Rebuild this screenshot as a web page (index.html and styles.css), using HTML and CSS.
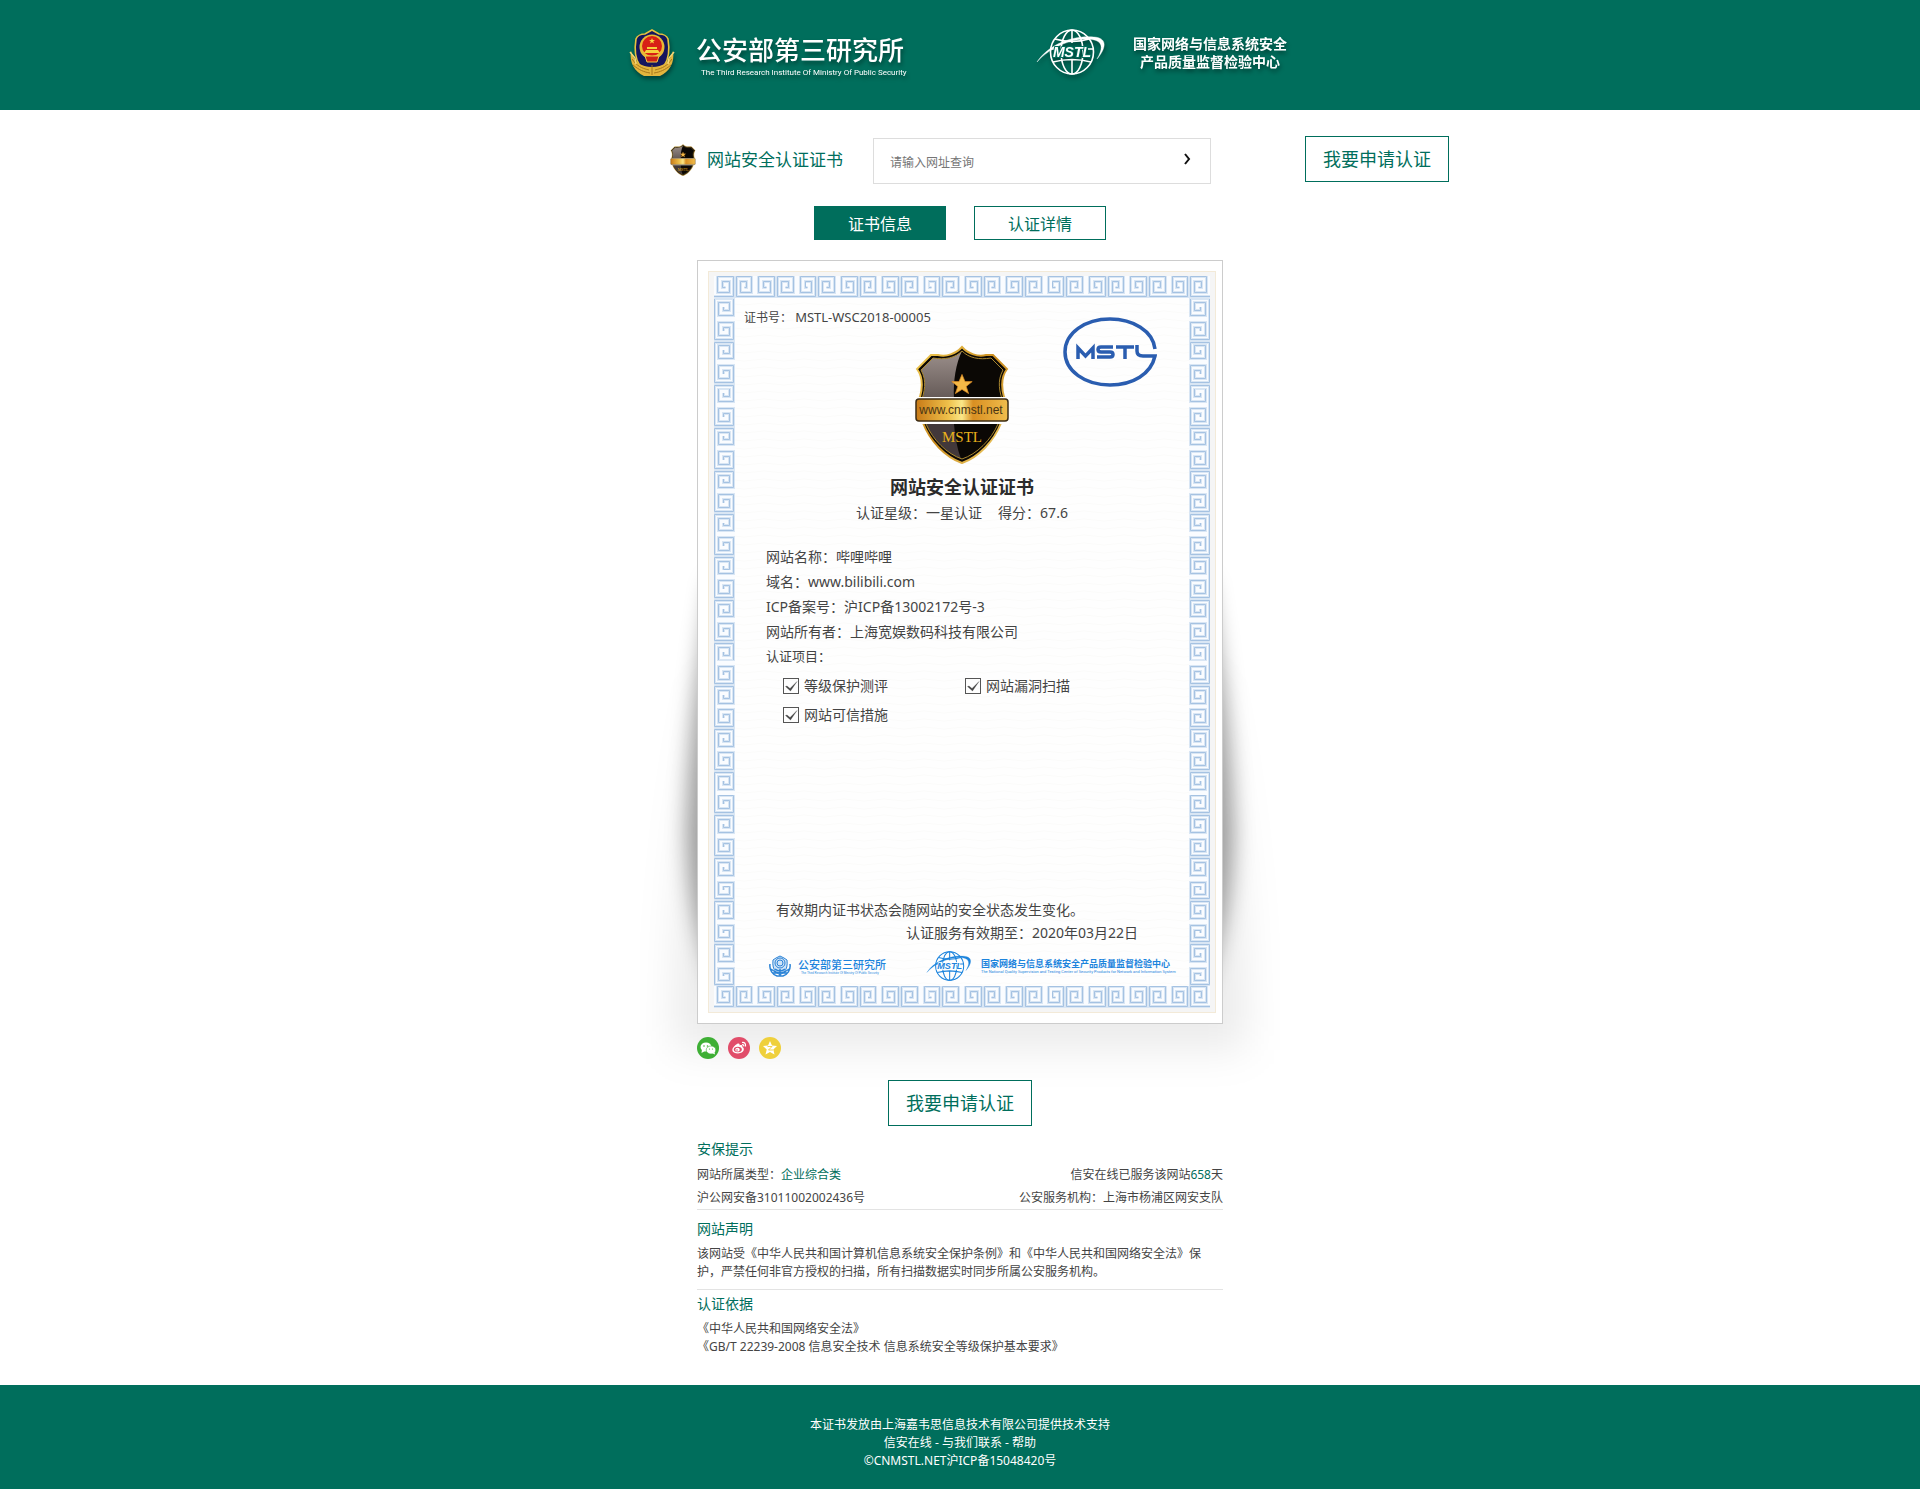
FILE: index.html
```html
<!DOCTYPE html>
<html lang="zh-CN">
<head>
<meta charset="utf-8">
<title>网站安全认证证书</title>
<link rel="stylesheet" href="styles.css">
</head>
<body>
<svg class="defs" aria-hidden="true">
  <defs>
    <linearGradient id="gold" x1="0" x2="1" y1="0" y2="1">
      <stop offset="0" stop-color="#f3cf57"/><stop offset=".5" stop-color="#c98a1c"/><stop offset="1" stop-color="#f6d873"/>
    </linearGradient>
    <linearGradient id="band" x1="0" x2="1" y1="0" y2="0">
      <stop offset="0" stop-color="#c87a17"/><stop offset=".35" stop-color="#eec04a"/><stop offset=".5" stop-color="#fbe788"/><stop offset=".62" stop-color="#d98f22"/><stop offset="1" stop-color="#f0bd4c"/>
    </linearGradient>
    <linearGradient id="gloss" x1="0" x2="0" y1="0" y2="1">
      <stop offset="0" stop-color="#9c908c"/><stop offset="1" stop-color="#645956"/>
    </linearGradient>
    <symbol id="shield" viewBox="0 0 94 119">
      <path d="M47 2C41 9 31 12 23 10H16L2 24C8 32 8 41 5 52L2 55V76L8 78C15 96 30 112 47 118C64 112 79 96 86 78L92 76V55L89 52C86 41 86 32 92 24L78 10H71C63 12 53 9 47 2Z" fill="#0b0805" stroke="url(#gold)" stroke-width="2"/>
      <path d="M47 6C40 13 30 15 18 13L6 25C12 36 10 46 7 54H39C38 36 41 18 47 6Z" fill="url(#gloss)"/>
      <path d="M11 79C18 95 32 108 46 114C42 103 40 92 39 79Z" fill="#42383a"/>
      <path d="M47 6C40 13 30 15 18 13L6 25C12 36 10 46 5 60M47 6C54 13 64 15 76 13L88 25C82 36 84 46 89 60M11 79C18 95 32 109 47 114C62 109 76 95 83 79" fill="none" stroke="#a8862f"/>
      <path d="M47 31L49.500 37H55.500L50.500 41L52.500 47L47 43.500L41.500 47L43.500 41L38.500 37H44.500Z" fill="#f5b947" stroke="#d98a24" stroke-width=".6" transform="translate(-9.400 -7.800) scale(1.200)"/>
      <path d="M0 52H94V79H0Z" fill="#fff"/>
      <rect x="1" y="54" width="92" height="22" rx="3" fill="url(#band)" stroke="#3d2c14" stroke-width="1.500"/>
    </symbol>
    <symbol id="globe" viewBox="0 0 70 46">
      <g fill="none" stroke="currentColor" stroke-width="1.600">
        <ellipse cx="36" cy="23" rx="21.500" ry="22"/>
        <ellipse cx="36" cy="23" rx="11" ry="22"/>
        <path d="M36 1V14M36 31V45M19 10Q36 15 53 10M17 33Q36 28 55 33M15 20H22M52 20H57"/>
        <path d="M1 33C12 16 36 6 58 8C71 9 71 18 61 30C68 18 66 12 56 10.500C38 8 14 18 1 33Z" fill="currentColor" stroke-width=".4"/>
      </g>
    </symbol>
    <symbol id="emblem" viewBox="0 0 46 48">
      <path d="M23 1L30 5C34 5 38 7 39 10C41 22 40 30 35 37L23 44L11 37C6 30 5 22 7 10C8 7 12 5 16 5Z" fill="#15155e" stroke="#e6c23e" stroke-width="1.600"/>
      <circle cx="23" cy="18" r="12.500" fill="#e9b935"/>
      <circle cx="23" cy="17" r="10" fill="#d81f16"/>
      <path d="M15 24H31L29 21H17ZM18 20H28V18H18Z" fill="#f6cf3c"/>
      <path d="M23 9L23.800 11H26L24.200 12.300L25 14.500L23 13.200L21 14.500L21.800 12.300L20 11H22.200Z" fill="#f9d742"/>
      <path d="M16 27H30L28 33H18Z" fill="#cc2117" stroke="#f1c940"/>
      <path d="M2 22C0 34 6 43 15 47H31C40 43 46 34 44 22C41 33 34 38 23 38C12 38 5 33 2 22Z" fill="#e3b53d"/>
      <path d="M3 30C8 37 12 39 20 41M4 36C10 41 15 43 21 44M43 30C38 37 34 39 26 41M42 36C36 41 31 43 25 44M23 36V46" fill="none" stroke="#a8771c"/>
      <path d="M1 23L6 29L7 35M45 23L40 29L39 35" fill="none" stroke="#f4d77a" stroke-width="1.500"/>
    </symbol>
  </defs>
</svg>

<header class="top">
  <div class="top-inner">
    <div class="org">
      <svg class="org-emblem"><use href="#emblem"/></svg>
      <div class="org-text">
        <strong class="org-name">公安部第三研究所</strong>
        <span class="org-en">The Third Research Institute Of Ministry Of Public Security</span>
      </div>
    </div>
    <div class="org">
      <svg class="org-globe" viewBox="0 0 70 46"><use href="#globe"/><text class="globe-text" x="36" y="28">MSTL</text></svg>
      <strong class="center-name">国家网络与信息系统安全<br>产品质量监督检验中心</strong>
    </div>
  </div>
</header>

<main>
  <div class="search-row">
    <div class="brand">
      <svg class="brand-icon" viewBox="0 0 94 119"><use href="#shield"/><text class="shield-mark" x="47" y="101">MSTL</text></svg>
      <h1 class="brand-name">网站安全认证证书</h1>
    </div>
    <form class="search">
      <input class="search-input" type="text" aria-label="网址查询" placeholder="请输入网址查询">
      <button class="search-go" type="button" aria-label="查询"><svg viewBox="0 0 8 12"><path d="M2 1L6 6L2 11"/></svg></button>
    </form>
    <button class="apply apply-top" type="button">我要申请认证</button>
  </div>

  <nav class="tabs">
    <button class="tab tab-active" type="button">证书信息</button>
    <button class="tab" type="button">认证详情</button>
  </nav>

  <section class="stage">
    <div class="card">
      <div class="mat">
        <article class="paper">
          <div class="paper-head">
            <p class="cert-no">证书号： <span>MSTL-WSC2018-00005</span></p>
            <svg class="cert-shield" viewBox="0 0 94 119"><use href="#shield"/><text class="shield-url" x="46" y="69">www.cnmstl.net</text><text class="shield-mark" x="47" y="97">MSTL</text></svg>
            <svg class="cert-oval" viewBox="0 0 94 70" aria-label="MSTL">
              <g fill="none" stroke="#2a5db0" stroke-width="3.500">
                <path d="M92 32C90 14 70 2 47 2C22 2 2 16 2 35C2 54 22 68 47 68C70 68 88 57 92 39H80Q74 39 74 34V28"/>
                <path d="M15 42V31L22.500 39L30 31V42M50 30H38Q35 30 35 32.500T38 35H47Q50 35 50 37.500T47 40H34M53 30H71M62 30V42"/>
              </g>
            </svg>
          </div>
          <h2 class="cert-title">网站安全认证证书</h2>
          <p class="cert-level"><span>认证星级：一星认证</span><span>得分：67.6</span></p>
          <div class="cert-info">
            <p>网站名称：哔哩哔哩</p>
            <p>域名：www.bilibili.com</p>
            <p>ICP备案号：沪ICP备13002172号-3</p>
            <p>网站所有者：上海宽娱数码科技有限公司</p>
            <p class="cert-items">认证项目：</p>
          </div>
          <div class="checks">
            <label><input type="checkbox" checked>等级保护测评</label>
            <label><input type="checkbox" checked>网站漏洞扫描</label>
            <label><input type="checkbox" checked>网站可信措施</label>
          </div>
          <div class="cert-foot">
            <p class="cert-note">有效期内证书状态会随网站的安全状态发生变化。</p>
            <p class="cert-date">认证服务有效期至：2020年03月22日</p>
            <div class="cert-logos">
              <svg class="mini-emblem" viewBox="0 0 22 22">
                <g fill="none" stroke="#2b83d6">
                  <path d="M11 1L15 3L18 5Q19 13 15 17L11 20L7 17Q3 13 4 5L7 3Z" fill="#cfe3f7"/>
                  <circle cx="11" cy="8" r="5"/><circle cx="11" cy="8" r="3"/>
                  <path d="M1 9C0 15 4 20 8 21H14C18 20 22 15 21 9M2 14Q7 18 11 18T20 14M6 14Q11 18 16 14M4 18H18M11 14V21" stroke-width="1.500"/>
                </g>
              </svg>
              <div class="mini-org">
                <strong>公安部第三研究所</strong>
                <span>The Third Research Institute Of Ministry Of Public Security</span>
              </div>
              <svg class="mini-globe" viewBox="0 0 70 46"><use href="#globe"/><text class="globe-text" x="36" y="28">MSTL</text></svg>
              <div class="mini-center">
                <strong>国家网络与信息系统安全产品质量监督检验中心</strong>
                <span>The National Quality Supervision and Testing Center of Security Products for Network and Information System</span>
              </div>
            </div>
          </div>
        </article>
      </div>
    </div>
    <div class="share">
      <a href="#" aria-label="微信"><svg viewBox="0 0 22 22"><circle cx="11" cy="11" r="11" fill="#3eaf35"/><ellipse cx="9" cy="10" rx="5.500" ry="4.500" fill="#fff"/><path d="M5 12L4.500 16L8 14Z" fill="#fff"/><ellipse cx="14" cy="13" rx="4.800" ry="4" fill="#fff" stroke="#3eaf35" stroke-width=".6"/><path d="M15 16L18 17.500L17.500 15Z" fill="#fff"/><g fill="#3eaf35"><circle cx="7" cy="9" r=".8"/><circle cx="10.500" cy="9" r=".8"/><circle cx="12.500" cy="12" r=".6"/><circle cx="15.500" cy="12" r=".6"/></g></svg></a>
      <a href="#" aria-label="微博"><svg viewBox="0 0 22 22"><circle cx="11" cy="11" r="11" fill="#e14d6a"/><path d="M9 7C11 6 12 7 11.500 8.500C14 7.500 15 8.500 14.300 10C17 11 16.500 16 10 16.500C4 16.500 3 12.500 6 9.500C7 8.500 8 7.500 9 7Z" fill="#fff"/><ellipse cx="9.800" cy="12.500" rx="4" ry="2.800" fill="#e14d6a"/><ellipse cx="9.500" cy="12.700" rx="2.200" ry="1.900" fill="#fff"/><circle cx="9" cy="13" r=".8" fill="#e14d6a"/><path d="M14 5.500Q18 5 17.500 9.500M14 7.500Q16 7.500 15.700 9.300" fill="none" stroke="#fff" stroke-width="1.200"/></svg></a>
      <a href="#" aria-label="QQ空间"><svg viewBox="0 0 22 22"><circle cx="11" cy="11" r="11" fill="#efd03c"/><path d="M11 4L13 8.500L18 9L14.300 12.400L15.500 17.500L11 15L6.500 17.500L7.700 12.400L4 9L9 8.500Z" fill="#fff"/><path d="M8.500 9.500H13L9.500 13H14" fill="none" stroke="#efd03c" stroke-width=".9"/></svg></a>
    </div>
    <button class="apply" type="button">我要申请认证</button>
  </section>

  <div class="notes">
    <section class="note">
      <h3>安保提示</h3>
      <div class="pair"><span>网站所属类型：<em>企业综合类</em></span><span>信安在线已服务该网站<em>658</em>天</span></div>
      <div class="pair"><span>沪公网安备31011002002436号</span><span>公安服务机构：上海市杨浦区网安支队</span></div>
    </section>
    <section class="note note-statement">
      <h3>网站声明</h3>
      <p>该网站受《中华人民共和国计算机信息系统安全保护条例》和《中华人民共和国网络安全法》保护，严禁任何非官方授权的扫描，所有扫描数据实时同步所属公安服务机构。</p>
    </section>
    <section class="note note-basis">
      <h3>认证依据</h3>
      <p>《中华人民共和国网络安全法》<br>《GB/T 22239-2008 信息安全技术 信息系统安全等级保护基本要求》</p>
    </section>
  </div>
</main>

<footer class="bottom">
  <p>本证书发放由上海嘉韦思信息技术有限公司提供技术支持</p>
  <p><a href="#">信安在线</a> - <a href="#">与我们联系</a> - <a href="#">帮助</a></p>
  <p>©CNMSTL.NET沪ICP备15048420号</p>
</footer>
</body>
</html>
```
FILE: styles.css
```css
* {
  box-sizing: border-box;
}

body {
  margin: 0;
  background: #fff;
  color: #444;
  font: 12px/18px "Noto Sans", "Noto Sans CJK SC", sans-serif;
}

h1, h2, h3, p {
  margin: 0;
  font-weight: 400;
}

button, input {
  font-family: inherit;
}

svg {
  display: block;
}

.defs {
  position: absolute;
  width: 0;
  height: 0;
}

/* Header */
.top {
  padding: 29px 0 31px;
  background: #006e5c;
  color: #fff;
}

.top-inner {
  display: flex;
  justify-content: space-between;
  max-width: 662px;
  margin: 0 auto;
  padding-right: 4px;
}

.org {
  display: flex;
  align-items: flex-start;
  filter: drop-shadow(1px 3px 2px rgba(0, 0, 0, 0.4));
}

.org-emblem {
  width: 46px;
  height: 48px;
}

.org-text {
  display: flex;
  flex-direction: column;
  margin: 5px 0 0 21px;
}

.org-name {
  font-size: 26px;
  line-height: 32px;
  font-weight: 500;
}

.org-en {
  padding-left: 5px;
  font: 8px/13px Roboto, sans-serif;
}

.org-globe {
  width: 70px;
  height: 46px;
  margin-right: 27px;
}

.globe-text {
  fill: currentColor;
  stroke: #006e5c;
  stroke-width: 2px;
  paint-order: stroke;
  font: italic bold 14px "Liberation Sans", sans-serif;
  text-anchor: middle;
}

.center-name {
  margin-top: 6px;
  font-size: 14px;
  line-height: 18px;
  text-align: center;
}

/* Search */
.search-row {
  display: flex;
  max-width: 980px;
  margin: 0 auto;
  padding: 26px 0 0 200px;
}

.brand {
  display: flex;
  align-items: center;
  gap: 11px;
  height: 48px;
  margin-right: 30px;
}

.brand-icon {
  width: 26px;
  height: 32px;
}

.brand-name {
  color: #006e5c;
  font-size: 17px;
  line-height: 24px;
}

.search {
  display: flex;
  width: 338px;
  height: 46px;
  margin-top: 2px;
  border: 1px solid #ddd;
}

.search-input {
  flex: 1;
  min-width: 0;
  padding: 2px 0 0 16px;
  border: 0;
  outline: 0;
  background: none;
  font-size: 12px;
}

.search-input::placeholder {
  color: #757575;
}

.search-go {
  width: 48px;
  padding: 0 0 4px 21px;
  border: 0;
  background: none;
}

.search-go svg {
  width: 8px;
  height: 12px;
  fill: none;
  stroke: #111;
  stroke-width: 2px;
}

.apply {
  width: 144px;
  height: 46px;
  padding: 0 0 2px;
  border: 1px solid #006e5c;
  background: #fff;
  color: #006e5c;
  font-size: 18px;
}

.apply-top {
  margin: 0 1px 0 auto;
}

/* Tabs */
.tabs {
  display: flex;
  justify-content: center;
  gap: 28px;
  padding: 22px 0 20px;
}

.tab {
  width: 132px;
  height: 34px;
  padding: 0;
  border: 1px solid #006e5c;
  background: #fff;
  color: #006e5c;
  font-size: 16px;
}

.tab-active {
  background: #006e5c;
  color: #fff;
}

/* Certificate */
.stage {
  display: flex;
  flex-direction: column;
  align-items: center;
  max-width: 640px;
  margin: 0 auto;
  padding: 0 57px;
  background: url("data:image/svg+xml,%3Csvg xmlns='http://www.w3.org/2000/svg' viewBox='0 0 640 866' preserveAspectRatio='none'%3E%3Cdefs%3E%3Cfilter id='a' x='-20%25' y='-20%25' width='140%25' height='140%25'%3E%3CfeGaussianBlur stdDeviation='10'/%3E%3C/filter%3E%3Cfilter id='b' x='-20%25' y='-30%25' width='140%25' height='160%25'%3E%3CfeGaussianBlur stdDeviation='20'/%3E%3C/filter%3E%3C/defs%3E%3Cpath filter='url(%23b)' fill-opacity='.08' d='M70 420Q34 600 34 790H606Q606 600 570 420Z'/%3E%3Cpath filter='url(%23a)' fill-opacity='.34' d='M70 320Q50 440 46 570Q48 660 76 730H564Q592 660 594 570Q590 440 570 320Z'/%3E%3C/svg%3E") 0 0 / 100% 100% no-repeat;
}

.card {
  width: 100%;
  padding: 10px 6px 10px 10px;
  border: 1px solid #ccc;
  background: #fff;
}

.mat {
  padding: 4px 5px;
  border: 1px solid #f3ead8;
  background: #f5f5f5;
}

.paper {
  display: flex;
  flex-direction: column;
  min-height: 732px;
  padding: 32px 0 27px;
  background:
    url("data:image/svg+xml,%3Csvg xmlns='http://www.w3.org/2000/svg' viewBox='0 0 42 22' preserveAspectRatio='none'%3E%3Cpath fill='%23fafcff' d='M0 0h42v22H0z'/%3E%3Cg fill='none' stroke='%23d9e6f4' stroke-width='3'%3E%3Cpath id='p' d='M0 20.500H19.500V.5H3.500V16.500H15.500V5.500H8.500V11.500H11.500M42 20.500H22.500V.5H38.500V16.500H26.500V5.500H33.500V11.500H30.500'/%3E%3C/g%3E%3Cuse href='%23p' fill='none' stroke='%23a5c2e2'/%3E%3C/svg%3E") 0 0 / 42px 22px round no-repeat,
    url("data:image/svg+xml,%3Csvg xmlns='http://www.w3.org/2000/svg' viewBox='0 0 42 22' preserveAspectRatio='none'%3E%3Cpath fill='%23fafcff' d='M0 0h42v22H0z'/%3E%3Cg fill='none' stroke='%23d9e6f4' stroke-width='3'%3E%3Cpath id='p' d='M0 20.500H19.500V.5H3.500V16.500H15.500V5.500H8.500V11.500H11.500M42 20.500H22.500V.5H38.500V16.500H26.500V5.500H33.500V11.500H30.500'/%3E%3C/g%3E%3Cuse href='%23p' fill='none' stroke='%23a5c2e2'/%3E%3C/svg%3E") 0 100% / 42px 22px round no-repeat,
    url("data:image/svg+xml,%3Csvg xmlns='http://www.w3.org/2000/svg' viewBox='0 0 21 44' preserveAspectRatio='none'%3E%3Cpath fill='%23fafcff' d='M0 0h21v44H0z'/%3E%3Cg fill='none' stroke='%23d9e6f4' stroke-width='3'%3E%3Cpath id='p' d='M.5 0V20.500H19.500V3.500H4.500V16.500H15.500V8.500H9.500V12M.5 44V23.500H19.500V40.500H4.500V27.500H15.500V35.500H9.500V32'/%3E%3C/g%3E%3Cuse href='%23p' fill='none' stroke='%23a5c2e2'/%3E%3C/svg%3E") 0 0 / 21px 44px no-repeat round,
    url("data:image/svg+xml,%3Csvg xmlns='http://www.w3.org/2000/svg' viewBox='0 0 21 44' preserveAspectRatio='none'%3E%3Cpath fill='%23fafcff' d='M0 0h21v44H0z'/%3E%3Cg fill='none' stroke='%23d9e6f4' stroke-width='3'%3E%3Cpath id='p' d='M20.500 0V20.500H1.500V3.500H16.500V16.500H5.500V8.500H11.500V12M20.500 44V23.500H1.500V40.500H16.500V27.500H5.500V35.500H11.500V32'/%3E%3C/g%3E%3Cuse href='%23p' fill='none' stroke='%23a5c2e2'/%3E%3C/svg%3E") 100% 0 / 21px 44px no-repeat round,
    url("data:image/svg+xml,%3Csvg xmlns='http://www.w3.org/2000/svg' width='40' height='8'%3E%3Cpath d='M0 4Q10 2 20 4T40 4' fill='none' stroke='%23fbfbfa'/%3E%3C/svg%3E"),
    #fefefe;
}

.paper-head {
  display: grid;
  grid-template-columns: minmax(0, 1fr) 94px minmax(0, 1fr);
  align-items: start;
  padding: 0 30px;
}

.cert-no {
  white-space: nowrap;
}

.cert-no span {
  font-size: 13px;
}

.cert-shield {
  width: 94px;
  height: 119px;
  margin-top: 37px;
}

.shield-url {
  fill: #4a3514;
  font: 12px "Liberation Sans", sans-serif;
  text-anchor: middle;
}

.shield-mark {
  fill: #e9b11c;
  font: 15px "Liberation Serif", serif;
  text-anchor: middle;
}

.cert-oval {
  justify-self: end;
  width: 94px;
  height: 70px;
  margin: 9px 23px 0 0;
}

.cert-title {
  margin-top: 10px;
  color: #2b2b2b;
  font-size: 18px;
  line-height: 26px;
  font-weight: 700;
  text-align: center;
}

.cert-level {
  display: flex;
  justify-content: center;
  gap: 16px;
  font-size: 14px;
  line-height: 26px;
}

.cert-info {
  margin-top: 18px;
  padding-left: 52px;
  font-size: 14px;
  line-height: 25px;
}

.cert-items {
  font-size: 13px;
}

.checks {
  display: grid;
  grid-template-columns: 182px 182px;
  margin-top: 2px;
  padding-left: 69px;
  font-size: 14px;
  line-height: 29px;
}

.checks label {
  display: flex;
  align-items: center;
  gap: 5px;
}

.checks input {
  appearance: none;
  width: 16px;
  height: 16px;
  margin: 0;
  border: 1px solid #555;
  background: url("data:image/svg+xml,%3Csvg xmlns='http://www.w3.org/2000/svg' viewBox='0 0 14 14'%3E%3Cpath d='M1.500 7.500L3 7L6 9.500L13 2.500L6.500 12Z' fill='%23444' stroke='%23444' stroke-width='.3'/%3E%3C/svg%3E") center / 14px 14px no-repeat;
}

.cert-foot {
  margin-top: auto;
  font-size: 14px;
  line-height: 23px;
}

.cert-note {
  padding-left: 62px;
}

.cert-date {
  padding-right: 72px;
  text-align: right;
}

.cert-logos {
  display: flex;
  align-items: center;
  margin-top: 7px;
  padding-left: 55px;
  color: #1c84dd;
}

.mini-emblem {
  width: 22px;
  height: 22px;
}

.mini-org,
.mini-center {
  display: flex;
  flex-direction: column;
  white-space: nowrap;
}

.mini-org {
  margin-left: 7px;
  font-size: 11px;
  line-height: 13px;
}

.mini-org strong {
  font-weight: 500;
}

.mini-org span {
  padding-left: 3px;
  font: 3px/4px "Liberation Sans", sans-serif;
}

.mini-globe {
  width: 46px;
  height: 30px;
  margin: 0 9px 0 40px;
}

.mini-globe .globe-text {
  stroke: #fefefe;
}

.mini-center {
  font-size: 9px;
  line-height: 11px;
}

.mini-center span {
  font: 4px/5px Roboto, sans-serif;
}

/* Share */
.share {
  display: flex;
  gap: 9px;
  align-self: flex-start;
  margin: 13px 0 21px;
}

.share svg {
  width: 22px;
  height: 22px;
}

/* Notes */
.notes {
  max-width: 526px;
  margin: 0 auto;
  padding: 13px 0 29px;
}

.note {
  border-bottom: 1px solid #e3e3e3;
}

.note h3 {
  margin-bottom: 4px;
  color: #006e5c;
  font-size: 14px;
  line-height: 20px;
}

.note em {
  color: #006e5c;
  font-style: normal;
}

.pair {
  display: flex;
  justify-content: space-between;
  line-height: 23px;
}

.note-statement {
  padding: 9px 0 8px;
}

.note-basis {
  padding-top: 4px;
  border-bottom: 0;
}

.note-statement h3,
.note-basis h3 {
  margin-bottom: 6px;
}

/* Footer */
.bottom {
  padding: 31px 0 19px;
  background: #006e5c;
  color: #fff;
  text-align: center;
}

.bottom a {
  color: inherit;
  text-decoration: none;
}
```
